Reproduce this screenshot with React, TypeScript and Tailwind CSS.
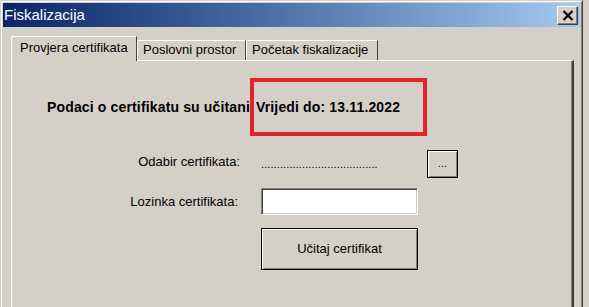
import React from "react";

const FACE = "bg-[#d4d0c8]";

const CloseButton = () => (
  <div className="w-[21px] h-[19px] bg-[#d4d0c8] border-t border-l border-t-white border-l-white border-r border-b border-r-[#404040] border-b-[#404040] shadow-[inset_-1px_-1px_0_#808080] flex items-center justify-center">
    <svg width="12" height="11" viewBox="0 0 12 11">
      <path d="M1.5 1 L10.5 10 M10.5 1 L1.5 10" stroke="#000" strokeWidth="2.2" />
    </svg>
  </div>
);

const tabs = ["Provjera certifikata", "Poslovni prostor", "Početak fiskalizacije"];
const tabWidths = ["w-[126px]", "w-[109px]", "w-[132px]"];

const Tabs = () => (
  <div className="flex items-end ml-[8px] h-[33px] relative z-10">
    {tabs.map((t, i) =>
      i === 0 ? (
        <div
          key={t}
          className={`${tabWidths[i]} h-[25px] -mb-px ${FACE} border-t border-l border-t-white border-l-white border-r border-r-[#404040] rounded-tl-[2px] pl-[8px] pt-[3px] text-[13px] leading-[16px]`}
        >
          {t}
        </div>
      ) : (
        <div
          key={t}
          className={`${tabWidths[i]} h-[20px] ${FACE} border-t border-l border-t-white border-l-white border-r border-r-[#404040] rounded-tl-[2px] pl-[5px] pt-[1px] text-[13px] leading-[16px]`}
        >
          {t}
        </div>
      )
    )}
  </div>
);

const Panel = () => (
  <div className="relative ml-[8px] w-[563px] h-[260px] bg-[#d4d0c8] border-t border-l border-t-white border-l-white border-r-2 border-r-[#404040] shadow-[inset_-1px_0_0_#808080]">
    {/* annotation box */}
    <div className="absolute left-[238px] top-[17px] w-[177px] h-[58px] border-[4px] border-[#e3232b]" />

    <div className="mt-[38px] pl-[35px] flex text-[14px] leading-[17px] font-bold tracking-[0.15px]">
      <span className="w-[209px] whitespace-nowrap">Podaci o certifikatu su učitani</span>
      <span className="whitespace-nowrap">Vrijedi do: 13.11.2022</span>
    </div>

    <div className="mt-[34px] flex flex-col gap-[10px] text-[13px] leading-[16px]">
      <div className="flex h-[28px]">
        <div className="w-[228px] text-right pt-[4px]">Odabir certifikata:</div>
        <div className="ml-[21px] w-[166px] text-[11px] leading-[14px] pt-[7px] tracking-[0.1px] overflow-hidden whitespace-nowrap">
          .....................................
        </div>
        <button className="w-[31px] h-[28px] bg-[#d4d0c8] border border-black shadow-[inset_1px_1px_0_#fff,inset_-1px_-1px_0_#808080] text-[11px] leading-[14px] pb-[2px]">
          ...
        </button>
      </div>
      <div className="flex h-[27px]">
        <div className="w-[226px] text-right pt-[6px]">Lozinka certifikata:</div>
        <div className="ml-[23px] w-[157px] h-[27px] bg-white border border-t-[#808080] border-l-[#808080] border-b-white border-r-white shadow-[inset_1px_1px_0_#404040,inset_-1px_-1px_0_#d4d0c8]" />
      </div>
      <div className="flex mt-[3px]">
        <div className="w-[249px]" />
        <button className="w-[157px] h-[42px] bg-[#d4d0c8] border border-black shadow-[inset_1px_1px_0_#fff,inset_-1px_-1px_0_#808080] text-[13px] leading-[16px]">
          Učitaj certifikat
        </button>
      </div>
    </div>
  </div>
);

export default function App() {
  return (
    <div
      className="w-[589px] h-[307px] overflow-hidden bg-[#d4d0c8] text-black"
      style={{ fontFamily: '"Liberation Sans", Arial, sans-serif' }}
    >
      <div className="w-[583px] h-[330px] border border-t-[#d4d0c8] border-l-[#d4d0c8] border-r-[#404040] border-b-[#404040]">
        <div className="h-full border border-t-white border-l-white border-r-[#808080] border-b-[#808080] p-px">
          <div className="h-[24px] flex items-center justify-between bg-gradient-to-r from-[#0a246a] to-[#a6caf0] pl-[1px] pr-[2px]">
            <span className="text-white text-[15px] leading-[18px]">Fiskalizacija</span>
            <CloseButton />
          </div>
          <Tabs />
          <Panel />
        </div>
      </div>
    </div>
  );
}
